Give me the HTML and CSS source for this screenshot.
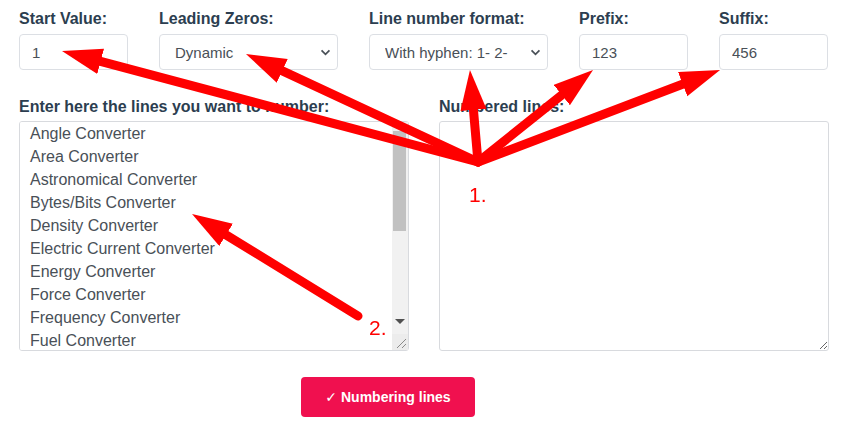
FILE: index.html
```html
<!DOCTYPE html>
<html lang="en">
<head>
  <meta charset="UTF-8">
  <title>Line Numbering</title>
  <link rel="stylesheet" href="styles.css">
</head>
<body>
  <div class="page">
    <div class="options">
      <label class="field field-sm">Start Value:
        <input type="text" class="control" value="1">
      </label>
      <label class="field field-lg">Leading Zeros:
        <select class="control select">
          <option>Dynamic</option>
        </select>
      </label>
      <label class="field field-lg">Line number format:
        <select class="control select">
          <option>With hyphen: 1- 2- 3-</option>
        </select>
      </label>
      <label class="field field-sm">Prefix:
        <input type="text" class="control" value="123">
      </label>
      <label class="field field-sm">Suffix:
        <input type="text" class="control" value="456">
      </label>
    </div>

    <div class="areas">
      <div class="area">
        <label for="inputLines">Enter here the lines you want to number:</label>
        <div class="box">
          <textarea id="inputLines" class="lines">Angle Converter
Area Converter
Astronomical Converter
Bytes/Bits Converter
Density Converter
Electric Current Converter
Energy Converter
Force Converter
Frequency Converter
Fuel Converter
Length Converter
Luminance Converter
Mass Converter
Power Converter
Pressure Converter
Speed Converter
Temperature Converter
Time Converter
Torque Converter
Volume Converter</textarea>
          <div class="scroll">
            <span class="scroll-btn up"></span>
            <span class="scroll-thumb"></span>
            <span class="scroll-space"></span>
            <span class="scroll-btn down"></span>
            <span class="scroll-corner">
              <svg width="16" height="16" viewBox="0 0 16 16">
                <path d="M14 5 L5 14 M14 10 L10 14" stroke="#8a8a8a" stroke-width="1"/>
              </svg>
            </span>
          </div>
        </div>
      </div>
      <div class="area">
        <label for="outputLines">Numbered lines:</label>
        <div class="box">
          <textarea id="outputLines" class="lines"></textarea>
        </div>
      </div>
    </div>

    <div class="actions">
      <button type="button">✓ Numbering lines</button>
    </div>

    <!-- annotation overlay -->
    <svg class="marks" width="847" height="430" viewBox="0 0 847 430">
      <defs>
        <marker id="head" markerUnits="userSpaceOnUse" markerWidth="42" markerHeight="28" refX="4" refY="13" orient="auto">
          <path d="M0,0 L40,13 L0,26 z" fill="#ff0000"/>
        </marker>
      </defs>
      <g stroke="#ff0000" stroke-width="9" stroke-linecap="round" fill="none">
        <line x1="478" y1="162" x2="96.8" y2="60.3" marker-end="url(#head)"/>
        <line x1="478" y1="162" x2="278.6" y2="69.2" marker-end="url(#head)"/>
        <line x1="478" y1="162" x2="473.1" y2="105.9" marker-end="url(#head)"/>
        <line x1="478" y1="162" x2="564.9" y2="92.5" marker-end="url(#head)"/>
        <line x1="478" y1="162" x2="686.4" y2="82.8" marker-end="url(#head)"/>
        <line x1="358" y1="316" x2="222.7" y2="232.8" marker-end="url(#head)"/>
      </g>
      <text x="469" y="202" class="mark-num">1.</text>
      <text x="369" y="335" class="mark-num">2.</text>
    </svg>
  </div>
</body>
</html>
```

FILE: styles.css
```css
body {
  margin: 0;
  font-family: 'Liberation Sans', Arial, sans-serif;
  background-color: #ffffff;
}

.page {
  position: relative;
  width: 847px;
  height: 430px;
  padding: 10px 0 0 19px;
  box-sizing: border-box;
}

.options {
  display: flex;
  gap: 31px;
}

.field,
.area {
  display: flex;
  flex-direction: column;
  font-size: 16px;
  font-weight: bold;
  line-height: 18px;
  color: #2c3e50;
}

.field-sm {
  width: 109px;
}

.field-lg {
  width: 179px;
}

.control {
  margin-top: 6px;
  height: 36px;
  padding: 0 12px;
  border: 1px solid #dcdfe4;
  border-radius: 4px;
  box-sizing: border-box;
  font-family: 'Liberation Sans', Arial, sans-serif;
  font-size: 15px;
  font-weight: normal;
  color: #495057;
  background-color: #ffffff;
}

.select {
  appearance: none;
  padding: 0 38px 0 15px;
  background-image: url("data:image/svg+xml,%3Csvg xmlns='http://www.w3.org/2000/svg' width='12' height='8' viewBox='0 0 12 8'%3E%3Cpath d='M1.5 1.5 L6 6 L10.5 1.5' fill='none' stroke='%23495057' stroke-width='2'/%3E%3C/svg%3E");
  background-repeat: no-repeat;
  background-position: right 6px center;
  background-size: 11px 7px;
}

.areas {
  display: flex;
  gap: 30px;
  margin-top: 28px;
}

.area {
  width: 390px;
}

.box {
  position: relative;
  margin-top: 5px;
  height: 230px;
}

.lines {
  display: block;
  width: 100%;
  height: 100%;
  padding: 0 10px;
  border: 1px solid #d8dade;
  border-radius: 3px;
  box-sizing: border-box;
  font-family: 'Liberation Sans', Arial, sans-serif;
  font-size: 16px;
  font-weight: normal;
  line-height: 23px;
  color: #495057;
  resize: both;
}

/* scrollbar drawn over the textarea */
.scroll {
  position: absolute;
  top: 1px;
  right: 1px;
  bottom: 1px;
  width: 16px;
  display: flex;
  flex-direction: column;
  background-color: #f1f1f1;
}

.scroll-btn {
  height: 9px;
  display: flex;
  align-items: center;
  justify-content: center;
}

.scroll-btn.up::before {
  content: "";
  border-left: 4px solid transparent;
  border-right: 4px solid transparent;
  border-bottom: 4px solid #a3a3a3;
}

.scroll-btn.down {
  height: 14px;
  margin-bottom: 6px;
}

.scroll-btn.down::before {
  content: "";
  border-left: 5px solid transparent;
  border-right: 5px solid transparent;
  border-top: 5px solid #505050;
}

.scroll-thumb {
  height: 100px;
  margin: 0 2px 0 1px;
  background-color: #c1c1c1;
}

.scroll-space {
  flex: 1;
}

.scroll-corner {
  height: 16px;
  background-color: #ececec;
}

.scroll-corner svg {
  display: block;
}

.actions {
  margin: 26px 0 0 282px;
}

button {
  width: 174px;
  height: 40px;
  background-color: #f0104f;
  color: #ffffff;
  border: none;
  border-radius: 4px;
  font-family: 'Liberation Sans', 'DejaVu Sans', sans-serif;
  font-size: 14px;
  font-weight: bold;
  cursor: pointer;
}

.marks {
  position: absolute;
  top: 0;
  left: 0;
  pointer-events: none;
}

.mark-num {
  fill: #ff0000;
  font-family: 'Liberation Sans', Arial, sans-serif;
  font-size: 21px;
}
```
